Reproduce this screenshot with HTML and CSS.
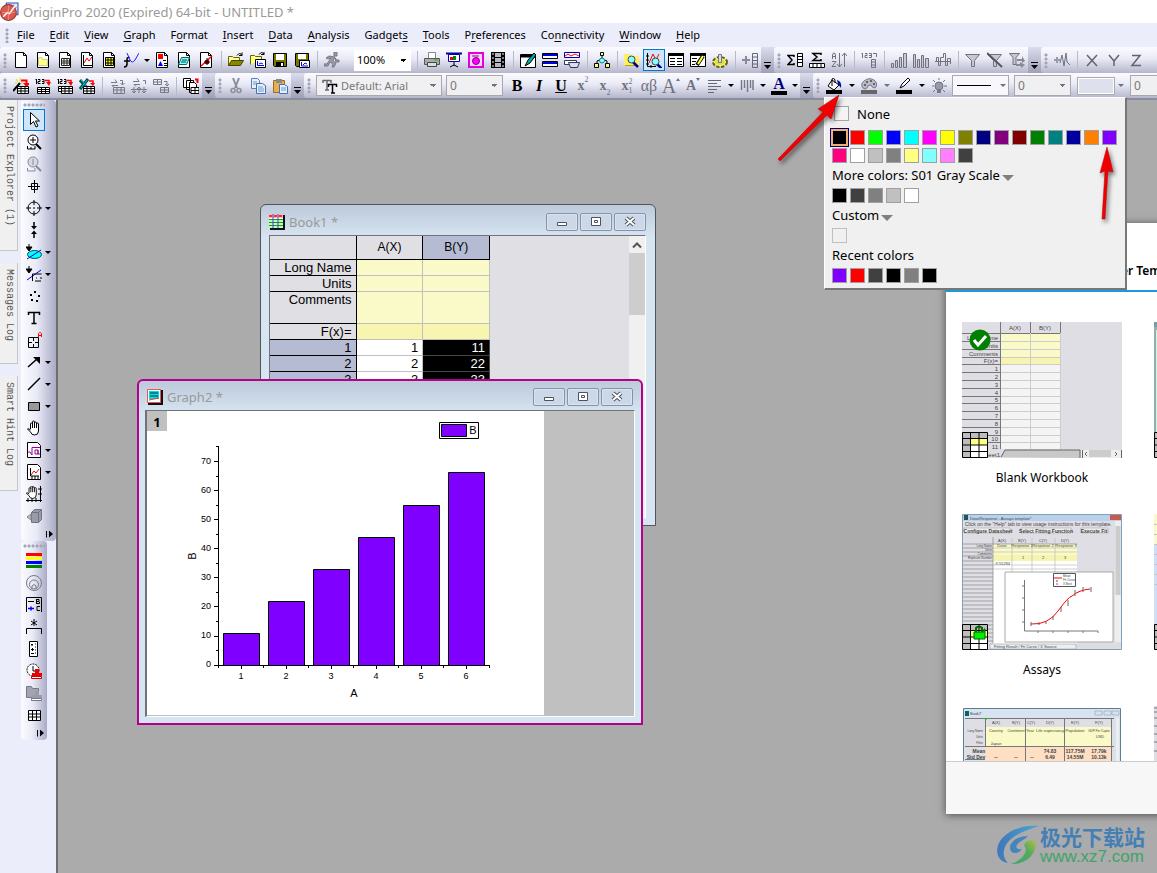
FILE: index.html
```html
<!DOCTYPE html>
<html lang="en">
<head>
<meta charset="utf-8">
<title>OriginPro 2020 (Expired) 64-bit - UNTITLED *</title>
<link rel="stylesheet" href="styles.css">
</head>
<body>
<svg class="defs" aria-hidden="true">
<defs>
<linearGradient id="swoosh" x1="0" y1="0" x2="1" y2="0"><stop offset="0" stop-color="#4176ba"/><stop offset="1" stop-color="#48a9cf"/></linearGradient>
<linearGradient id="leaf" x1="0" y1="1" x2="1" y2="0"><stop offset="0" stop-color="#3da66b"/><stop offset=".6" stop-color="#55aa5b"/><stop offset="1" stop-color="#b5bd4c"/></linearGradient>
<g id="page"><path d="M2.500.5h8l3 3v12h-11z" fill="#fff" stroke="#000"/><path d="M10.500.5v3h3" fill="none" stroke="#000"/></g>
<g id="redarrow"><path d="M8 2.500h5.500V6" fill="none" stroke="#f00" stroke-width="2"/><path d="M10 5h7l-3.500 4z" fill="#f00"/></g>
<g id="minigrid"><path d="M4.500 8.500h11v7h-11zM4.500 10.500h11M4.500 13h11M8 8.500v7M12 8.500v7" fill="#fff" stroke="#000"/></g>
<g id="mag"><path d="M9 10l5 5" stroke="#00008b" stroke-width="2.500"/><circle cx="7.500" cy="7.500" r="3.500" fill="#8ff" stroke="#444"/></g>
<g id="stamp"><path d="M9 6h4v4h3v3H6v-3h3z" /><path d="M5.500 13.500h10v2h-10z" fill="#fff" stroke="currentColor"/></g>
</defs>
<symbol id="i-new" viewBox="0 0 16 16"><use href="#page"/></symbol>
<symbol id="i-folder" viewBox="0 0 16 16"><use href="#page"/><path d="M3.500 5.500h3l1 2h5v6h-9z" fill="#ffff80" stroke="#cc9"/></symbol>
<symbol id="i-book" viewBox="0 0 16 16"><use href="#page"/><path d="M4.500 6.500h8v7h-8zM4.500 9h8M4.500 11h8M7 6.500v7M10 6.500v7" fill="none" stroke="#222"/></symbol>
<symbol id="i-graph" viewBox="0 0 16 16"><use href="#page"/><path d="M4.500 3v10.500H13" fill="none" stroke="#000"/><path d="M5 11l3-5 2 3 3-4" fill="none" stroke="#f00"/></symbol>
<symbol id="i-matrix" viewBox="0 0 16 16"><use href="#page"/><path d="M4.500 5.500h8v8h-8zM4.500 8h8M4.500 11h8M7 5.500v8M10 5.500v8" fill="#ff0" stroke="#000"/></symbol>
<symbol id="i-func" viewBox="0 0 16 16"><path d="M6.500 5.500h-1Q4 5.500 4 7v5q0 3-3 3M1 9h6" fill="none" stroke="#000" stroke-width="1.500"/><path d="M4 1l3 7q2 4 5 0l4-7" fill="none" stroke="#22f"/></symbol>
<symbol id="i-layout" viewBox="0 0 16 16"><use href="#page"/><path d="M4 2h5v5H4z" fill="#f00"/><path d="M4 14l2.500-5L9 14z" fill="#00f"/><path d="M9 8.500h3M10 11.500h3M10 13.500h3" stroke="#000"/></symbol>
<symbol id="i-notes" viewBox="0 0 16 16"><use href="#page"/><path d="M5.500 5.500h8l-3 7h-8z" fill="#8ff" stroke="#066"/><path d="M6 8h5M5 10h5" stroke="#044"/></symbol>
<symbol id="i-digit" viewBox="0 0 16 16"><use href="#page"/><path d="M3 14L14 4" stroke="#f00" stroke-width="1.500"/><path d="M7 8h4v4H7z" fill="#a00"/><path d="M9 6v7M6 10h6" stroke="#000"/></symbol>
<symbol id="i-open" viewBox="0 0 16 16"><path d="M.5 13.500v-9h4l1 1h6v3" fill="#ff9" stroke="#660"/><path d="M.5 13.500l3-5h12l-3 5z" fill="#880" stroke="#440"/><path d="M9 3.500q3-4 5 0m0-3v3h-3" fill="none" stroke="#000"/></symbol>
<symbol id="i-opent" viewBox="0 0 16 16"><path d="M.5 12.500v-9h4l1 1h6v3" fill="#ff8" stroke="#660"/><path d="M9 2.500q3-4 5 0m0-3v3h-3" fill="none" stroke="#000"/><path d="M5.500 7.500h10v8h-10z" fill="#fff" stroke="#000"/><path d="M7.500 9v4.500H14M9 12l2-1 2 1" stroke="#00f" fill="none"/></symbol>
<symbol id="i-save" viewBox="0 0 16 16"><path d="M1.500 1.500h13v13h-12l-1-1z" fill="#770" stroke="#000"/><path d="M4 2h8v6H4z" fill="#fff"/><path d="M4 10h8v5H4z" fill="#000"/><path d="M9 11h2v3H9z" fill="#fff"/></symbol>
<symbol id="i-savet" viewBox="0 0 16 16"><path d="M1.500 1.500h13v13h-12l-1-1z" fill="#770" stroke="#000"/><path d="M4 2h8v5H4z" fill="#fff"/><path d="M5.500 8.500h10v7h-10z" fill="#fff" stroke="#000"/><path d="M7.500 10v4H14M9 13l2-2 2 1" stroke="#00f" fill="none"/></symbol>
<symbol id="i-run" viewBox="0 0 16 16"><path d="M10 0h3v4h-3zM5 4l6 1-2 4 3 2-2 4H8l1-3-3-2-2 4H0v-2h3l4-6-3 1-2-1zM11 6l2 2h2v2h-3z" fill="#999ba9" stroke="#777986"/></symbol>
<symbol id="i-print" viewBox="0 0 16 16"><path d="M4.500 6V.5h7V6" fill="#fff" stroke="#888"/><path d="M.5 6.500h15v6H.5z" fill="#aaa" stroke="#555"/><path d="M3.500 10.500h9v4h-9z" fill="#ddd" stroke="#444"/><path d="M10 8h4" stroke="#0c0" /></symbol>
<symbol id="i-slide" viewBox="0 0 16 16"><path d="M0 1.500h16" stroke="#00a" stroke-width="2"/><path d="M2.500 2.500h11v7h-11z" fill="#fff" stroke="#00a"/><path d="M4 5h4v3H4z" fill="#f00"/><path d="M7 4h3v4H7z" fill="#080"/><path d="M8 10v4M4 15l4-2 4 2" fill="none" stroke="#000"/></symbol>
<symbol id="i-camera" viewBox="0 0 16 16"><path d="M1 1h14v14H1z" fill="#ffd8ff" stroke="#e000e0" stroke-width="2"/><circle cx="8" cy="9" r="3.500" fill="#f0f" stroke="#808"/><path d="M4 4h7" stroke="#808"/></symbol>
<symbol id="i-film" viewBox="0 0 16 16"><path d="M1 0h14v16H1z"/><path d="M5 1h6v4H5zM5 6h6v4H5zM5 11h6v4H5z" fill="#b8b8c4"/><path d="M3 1v15M13 1v15" stroke="#fff" stroke-dasharray="2 2" stroke-width="1"/></symbol>
<symbol id="i-pen" viewBox="0 0 16 16"><path d="M.5 2.500h15v13H.5z" fill="#fff" stroke="#000"/><path d="M1 4h15" stroke="#000" stroke-width="3"/><path d="M14 1L8 8l-3 6 5-3 6-8z" fill="#0aa" stroke="#000"/></symbol>
<symbol id="i-bands" viewBox="0 0 16 16"><path d="M.5 1.500h15v5H.5zM.5 9.500h15v5H.5z" fill="#fff" stroke="#000"/><path d="M1 2h14v2H1zM1 10h14v2H1z" fill="#00d"/></symbol>
<symbol id="i-stackw" viewBox="0 0 16 16"><path d="M.5.5h15v5H.5z" fill="#fff" stroke="#00a"/><path d="M1 4l3-2 3 2 4-2 4 2" fill="none" stroke="#f00"/><path d="M.5 8.500h12v4H.5z" fill="#fff" stroke="#336"/><path d="M4.500 10.500h11l-2 5h-7z" fill="#dde" stroke="#336"/></symbol>
<symbol id="i-tree" viewBox="0 0 16 16"><path d="M8 4v4M3 12V9l5-2 5 2v3" fill="none" stroke="#000"/><path d="M6.500.5h3v3h-3zM.5 11.500h4v4h-4zM11.500 11.500h4v4h-4z" fill="#ff8" stroke="#000"/><circle cx="8" cy="8.500" r="2.500" fill="#8ff" stroke="#088"/></symbol>
<symbol id="i-find" viewBox="0 0 16 16"><path d="M0 2h6l2 2h7v9H0z" fill="#fe6"/><path d="M1 13.500h12" stroke="#aa0"/><use href="#mag"/></symbol>
<symbol id="i-zoomg" viewBox="0 0 16 16"><path d="M1.500 1v13.500H10M0 4h3M0 8h3M0 12h3M5 13v3" fill="none" stroke="#000"/><path d="M3 11l4-9 3 6 3-6" fill="none" stroke="#f00"/><g transform="translate(2 2)"><use href="#mag"/></g></symbol>
<symbol id="i-table" viewBox="0 0 16 16"><path d="M.5 1.500h15v13H.5z" fill="#fff" stroke="#000"/><path d="M0 2.500h16" stroke="#000" stroke-width="3"/><path d="M2 6.500h5M9 6.500h5M2 9.500h5M9 9.500h5M2 12.500h5M9 12.500h5" stroke="#000"/></symbol>
<symbol id="i-edit" viewBox="0 0 16 16"><path d="M.5 1.500h15v13H.5z" fill="#fff" stroke="#000"/><path d="M0 2.500h16" stroke="#000" stroke-width="3"/><path d="M2 6.500h5M2 9.500h4M2 12.500h3" stroke="#000"/><path d="M13 4l-6 9" stroke="#000" stroke-width="4"/><path d="M13 4l-5 8" stroke="#ff4" stroke-width="2"/></symbol>
<symbol id="i-gear" viewBox="0 0 16 16"><ellipse cx="8" cy="10" rx="6.500" ry="4.500" fill="#dd4" stroke="#660" stroke-width="3" stroke-dasharray="3 1.500"/><ellipse cx="8" cy="10" rx="5.500" ry="3.500" fill="#dd4" stroke="#ff9"/><path d="M6.500 2.500h3v8h-3z" fill="#ddd" stroke="#777"/></symbol>
<symbol id="i-addcol" viewBox="0 0 16 16"><path d="M0 8h8M4 4v8" stroke="#888a98" stroke-width="2"/><path d="M10.500 1.500h5v14h-5zM10 5h6M10 8.500h6M10 12h6" fill="none" stroke="#666876"/></symbol>
<symbol id="i-sumcol" viewBox="0 0 16 16"><path d="M7 5V3.500H1L5 8l-4 4.500h6V11" fill="none" stroke="#000" stroke-width="1.500"/><path d="M10.500 1.500h5v13h-5zM10 4.500h6M10 7.500h6M10 10.500h6" fill="#fff" stroke="#000"/></symbol>
<symbol id="i-sumrow" viewBox="0 0 16 16"><path d="M12 3V1.500H4L8 5 4 8.500h8V7" fill="none" stroke="#000" stroke-width="1.500"/><path d="M.5 11.500h15v4H.5zM4 12v4M8 12v4M12 12v4" fill="#fff" stroke="#000"/></symbol>
<symbol id="i-sort" viewBox="0 0 16 16"><g fill="none" stroke="#70727f"><path d="M1.500 7V3l1-2h1l1 2v4M1 4.500h4M1 9.500h4l-4 5h4M8.500 1v14M6 12l2.500 3 2.500-3M13.500 15V1M11 4l2.500-3L16 4"/></g></symbol>
<symbol id="i-123" viewBox="0 0 16 16"><g fill="none" stroke="#70727f"><path d="M.5 2l1-1v5M4 1.500h2v2H4v2h2.500M8 1.500h2.500v4H8M8 3.500h2M12 1.500h3.500V5M10.500 7.500h4v8h-4zM10 10h5M10 13h5"/></g></symbol>
<symbol id="i-bars1" viewBox="0 0 16 16"><path d="M.5 15.500v-4h2v4zM4.500 15.500v-7h2v7zM8.500 15.500v-10h2v10zM12.500 15.500V1.500h3v14z" fill="#c7c9d6" stroke="#70727f"/></symbol>
<symbol id="i-bars2" viewBox="0 0 16 16"><path d="M.5 15.500V2.500h2v13zM4.500 15.500v-8h2v8zM8.500 15.500v-12h2v12zM12.500 15.500v-9h3v9z" fill="#c7c9d6" stroke="#70727f"/></symbol>
<symbol id="i-bars3" viewBox="0 0 16 16"><path d="M0 9.500h16M1.500 9V5.500h2v8h2v-8h3V1.500h2v12h2v-7h3V12" fill="none" stroke="#70727f" stroke-width="1"/></symbol>
<symbol id="i-funnel" viewBox="0 0 16 16"><path d="M.5 2.500h14l-5 6v6h-3v-6z" fill="#c5c7d5" stroke="#70727f"/></symbol>
<symbol id="i-funnelx" viewBox="0 0 16 16"><path d="M.5 2.500h14l-5 6v6h-3v-6z" fill="#c5c7d5" stroke="#70727f"/><path d="M0 1l15 14" stroke="#555765" stroke-width="2"/></symbol>
<symbol id="i-funnelr" viewBox="0 0 16 16"><path d="M.5 1.500h10l-3.500 4v7H4v-7z" fill="#c5c7d5" stroke="#70727f"/><path d="M8 7h5V4l3 5-3 2v-2H8zM7 12h4v-2l5 3-4 3v-2H7z" fill="#888a98"/></symbol>
<symbol id="i-wave" viewBox="0 0 16 16"><path d="M0 8h6M3 5v6" stroke="#999ba9" stroke-width="2"/><path d="M6 11l2-8 2 11 2-13 1 9 3 3" fill="none" stroke="#70727f"/></symbol>
<symbol id="i-x" viewBox="0 0 16 16"><path d="M3 3l10 11M13 3L3 14" stroke="#62646f" stroke-width="1.500"/></symbol>
<symbol id="i-y" viewBox="0 0 16 16"><path d="M3 3l5 6 5-6M8 9v5" fill="none" stroke="#62646f" stroke-width="1.500"/></symbol>
<symbol id="i-z" viewBox="0 0 16 16"><path d="M4 3.500h8L4 13.500h9" fill="none" stroke="#62646f" stroke-width="1.500"/></symbol>
<symbol id="i-wand" viewBox="0 0 16 16"><path d="M0 13l7-8" stroke="#000" stroke-width="2"/><path d="M3 1l2 3M7 0v3M10 5H8M2 5h2" stroke="#dd0"/><use href="#redarrow"/><use href="#minigrid"/></symbol>
<symbol id="i-imp" viewBox="0 0 16 16"><path d="M.5 2l1-1v5M3 1.500h2v2H3v2h2.500M7 1.500h2v4H7M7 3.500h2" fill="none" stroke="#000"/><path d="M10 2.500h4V6" fill="none" stroke="#f00" stroke-width="1.500"/><path d="M11 4h5l-2 4z" fill="#f00"/><path d="M2.500 9.500h12v6h-12zM3 11.500h12M3 13.500h12M6.500 9v6M10.500 9v6" fill="#fff" stroke="#000"/></symbol>
<symbol id="i-imp2" viewBox="0 0 16 16"><path d="M.5 2l1-1v5M3 1.500h2v2H3v2h2.500M7 1.500h2v4H7M7 3.500h2" fill="none" stroke="#000"/><path d="M10 2.500h4V6" fill="none" stroke="#f00" stroke-width="1.500"/><path d="M11 4h5l-2 4z" fill="#f00"/><path d="M1.500 8.500h9v5h-9zM2 10.500h9" fill="#fff" stroke="#000"/><use href="#minigrid"/></symbol>
<symbol id="i-excel" viewBox="0 0 16 16"><path d="M1 2l8 9M9 1L1 11" stroke="#004b4b" stroke-width="3"/><path d="M2 2l7 8M8 2l-6 8" stroke="#0cc"/><path d="M10 3l4 0v3" fill="none" stroke="#f00" stroke-width="1.500"/><path d="M11 5h5l-2 3z" fill="#f00"/><use href="#minigrid"/></symbol>
<symbol id="i-re1" viewBox="0 0 16 16"><g fill="none" stroke="#777986"><path d="M2 4.500h6l-2-3M9 7.500H3l2 2M11 2.500h2.500V7m-2-2l2 2 2-2M4.500 9.500h11v6h-11zM4.500 12h11M8 9v6M12 9v6"/></g></symbol>
<symbol id="i-re2" viewBox="0 0 16 16"><g fill="none" stroke="#777986"><path d="M2 3.500h6l-2-3M9 6.500H3l2 2M12 2.500h2.500V6M3 9v6m-2-2l2 2 2-2M8 15V9m-2 2l2-2 2 2M13 9v6m-2-2l2 2 2-2M0 11.500h16"/></g></symbol>
<symbol id="i-re3" viewBox="0 0 16 16"><g fill="none" stroke="#777986"><path d="M.5 1.500h8v5h-8zM0 4h9M4.500 1v6M7.500 9.500h8v5h-8zM7 12h9M11.500 9v6M11 3.500h3V8m-2-2l2 2 2-2"/></g></symbol>
<symbol id="i-pages" viewBox="0 0 16 16"><path d="M.5.5h7v9h-7zM3.500 2.500h7v9h-7z" fill="#fff" stroke="#000"/><path d="M6.500 4.500h5l2 2v8h-7z" fill="#fff" stroke="#000"/><path d="M12 1.500h2.500V5" fill="none" stroke="#f00" stroke-width="2"/><path d="M8 9.500h8v6H8zM8 12.500h8M12 9v7" fill="#fff" stroke="#000"/></symbol>
<symbol id="i-cut" viewBox="0 0 16 16"><path d="M5 0l4 10M11 0L7 10" stroke="#8c8e9c" stroke-width="2"/><circle cx="5" cy="12.500" r="2" fill="none" stroke="#8c8e9c" stroke-width="1.500"/><circle cx="11" cy="12.500" r="2" fill="none" stroke="#8c8e9c" stroke-width="1.500"/></symbol>
<symbol id="i-copy" viewBox="0 0 16 16"><path d="M1.500.5h6l2 2v8h-8z" fill="#e5f0fc" stroke="#5580b8"/><path d="M6.500 5.500h6l3 2v8h-9z" fill="#e5f0fc" stroke="#4470b0"/><path d="M3 4h4M3 6h3M8 9h5M8 11h6M8 13h6" stroke="#6c98d0"/></symbol>
<symbol id="i-paste" viewBox="0 0 16 16"><path d="M1.500 2.500h11v12h-11z" fill="#e8b04c" stroke="#9b6b20"/><path d="M4 1h6v4H4z" fill="#888"/><path d="M7.500 6.500h5l3 2v7h-8z" fill="#e5f0fc" stroke="#4470b0"/><path d="M9 10h5M9 12h5" stroke="#6c98d0"/></symbol>
<symbol id="i-tt" viewBox="0 0 16 16"><path d="M1 2.500h8M5 2v10M1 2v3M9 2v3M3 12h4" stroke="#666876" stroke-width="1.500"/><path d="M6 6.500h9M10.500 6v9M6.500 6v3M14.500 6v3M9 15h4" stroke="#000" stroke-width="1.500"/></symbol>
<symbol id="i-align" viewBox="0 0 16 16"><path d="M1 2.500h13M1 5.500h9M1 8.500h13M1 11.500h9M1 14.500h6" stroke="#666876"/></symbol>
<symbol id="i-vert" viewBox="0 0 16 16"><path d="M2.500 2v10M5.500 2v8M8.500 2v12M11.500 2v8M14 2v10" stroke="#777986" stroke-width="1.500"/></symbol>
<symbol id="i-fill" viewBox="0 0 16 16"><path d="M6 2l7 5-5 5-6-4z" fill="#fff" stroke="#000"/><path d="M6 8V1q2-2 3 1v3" fill="none" stroke="#000"/><path d="M11 2q5 1 4 8l-3-4z" fill="#00109a"/><path d="M0 12h16v4H0z"/></symbol>
<symbol id="i-palette" viewBox="0 0 16 16"><path d="M2 10Q-1 6 3 3q5-4 10-1 5 4 1 8-3 0-4-3-4 0-4 3-2 2-4 0z" fill="#b8bac8" stroke="#777986"/><path d="M5 4h2M9 3h2M12 6h2M3 7h2" stroke="#666" stroke-width="2"/><path d="M0 12h16v4H0z" fill="#666"/></symbol>
<symbol id="i-line" viewBox="0 0 16 16"><path d="M4 10l2-4 6-6 2 2-6 6z" fill="#fff" stroke="#000"/><path d="M0 12h16v4H0z"/></symbol>
<symbol id="i-bulb" viewBox="0 0 16 16"><circle cx="8" cy="8" r="4" fill="#999bab" stroke="#70727f"/><path d="M6 11h4v4H6z" fill="#777986"/><path d="M8 0v2M1 8h2M13 8h3M2 2l2 2M14 2l-2 2M2 14l2-2M14 14l-2-2" stroke="#70727f"/></symbol>
<symbol id="i-arrow" viewBox="0 0 16 16"><path d="M4.500.5v12l3-3 2.500 5.500 2-1-2.500-5h4z" fill="#fff" stroke="#000"/></symbol>
<symbol id="i-zin" viewBox="0 0 16 16"><path d="M10 10l5 5" stroke="#000" stroke-width="2"/><circle cx="7" cy="6" r="5" fill="#fff" stroke="#000"/><path d="M4 6h6M7 3v6M1.500 12v3H9v-3M5 13v2" fill="none" stroke="#000"/></symbol>
<symbol id="i-zout" viewBox="0 0 16 16"><path d="M10 10l5 5" stroke="#888a98" stroke-width="2"/><circle cx="7" cy="6" r="5" fill="#d7d9e4" stroke="#888a98"/><path d="M7 3v6M1.500 12v3H9v-3" fill="none" stroke="#888a98"/></symbol>
<symbol id="i-cross" viewBox="0 0 16 16"><path d="M2 8.500h12M8.500 2v13M5.500 5.500h6v6h-6z" fill="none" stroke="#000"/></symbol>
<symbol id="i-target" viewBox="0 0 16 16"><circle cx="8" cy="8" r="6" fill="none" stroke="#000"/><path d="M8 0v5M8 11v5M0 8h5M11 8h5M7 8h2" stroke="#000"/></symbol>
<symbol id="i-arrows" viewBox="0 0 16 16"><path d="M8 0v5M8 11v5" stroke="#000" stroke-width="1.500"/><path d="M5 4h6L8 7.500zM5 12h6L8 8.500z"/></symbol>
<symbol id="i-ellipse" viewBox="0 0 16 16"><ellipse cx="8.500" cy="10.500" rx="7" ry="4" fill="#0ff" stroke="#055"/><path d="M1 15L15 6" stroke="#00d"/><path d="M3 0v4M0 3h6L3 7z" stroke="#000"/></symbol>
<symbol id="i-curve" viewBox="0 0 16 16"><path d="M1 14L15 4" stroke="#00d"/><path d="M3 0v4M0 3h6L3 7z" stroke="#000"/><path d="M6.500 15V8h9M10 12h1M14 12h2M9 15h6" fill="none" stroke="#000"/></symbol>
<symbol id="i-dots" viewBox="0 0 16 16"><path d="M8 3h2v2H8zM4 6h2v2H4zM12 7h2v2h-2zM5 11h2v2H5zM10 12h2v2h-2z"/></symbol>
<symbol id="i-text" viewBox="0 0 16 16"><path d="M2.500 5V2.500h11V5M8 2.500v11M5.500 13.500h5" fill="none" stroke="#000" stroke-width="1.500"/></symbol>
<symbol id="i-boxa" viewBox="0 0 16 16"><path d="M2.500 5.500h10v10h-10zM7.500 5v4M7.500 12v4M2 10.500h4M9 10.500h4" fill="none" stroke="#000"/><path d="M12.500 5V1.500l1-1h1l1 1V5M12.500 3.500h3" fill="none" stroke="#f00"/></symbol>
<symbol id="i-arr" viewBox="0 0 16 16"><path d="M2 13L11 5" stroke="#000" stroke-width="1.500"/><path d="M7 3h7v7z"/></symbol>
<symbol id="i-ln" viewBox="0 0 16 16"><path d="M2 14L14 2" stroke="#000" stroke-width="1.500"/></symbol>
<symbol id="i-rect" viewBox="0 0 16 16"><path d="M2.500 4.500h11v8h-11z" fill="#999" stroke="#000"/></symbol>
<symbol id="i-hand" viewBox="0 0 16 16"><path d="M4.500 9V4q0-1 1-1t1 1V2q0-1 1-1t1 1v1q0-1 1-1t1 1v1q0-1 1-1t1 1v7q0 4-4 4-3 0-4-3L1.500 9q1-1 3 1M6.500 4v4M8.500 3v5M10.500 4v4" fill="#fff" stroke="#000"/></symbol>
<symbol id="i-sqrt" viewBox="0 0 16 16"><path d="M1.500.5h10l3 3v12h-13z" fill="#fff" stroke="#000"/><path d="M2 10h2l2 3V5.500h8M12 8H9v4h3V8v4h2" fill="none" stroke="#909"/></symbol>
<symbol id="i-sgraph" viewBox="0 0 16 16"><path d="M1.500.5h10l3 3v12h-13z" fill="#fff" stroke="#000"/><path d="M4.500 4v8H13M6 12v3M9 12v3M12 12v3" fill="none" stroke="#000"/><path d="M5 11l3-4 2 2 3-4" fill="none" stroke="#f00"/></symbol>
<symbol id="i-pan" viewBox="0 0 16 16"><g transform="translate(-1 -1) scale(.9)"><use href="#i-hand" width="16" height="16"/></g><path d="M0 14.500h16M14.500 0v16M2 12v4M6 12v4M10 12v4M12 3h4M12 8h4" stroke="#000"/></symbol>
<symbol id="i-cube" viewBox="0 0 16 16"><path d="M5.500 4.500l3-3h7v10l-3 3h-7z" fill="#999bab" stroke="#70727f"/><path d="M5.500 4.500h7v10M12.500 4.500l3-3" fill="none" stroke="#70727f"/><path d="M5 6v6L1 9z" fill="#bbbdcb" stroke="#888"/></symbol>
<symbol id="i-colors" viewBox="0 0 16 16"><path d="M0 0h16v3H0z" fill="#f00"/><path d="M0 4h16v3H0z" fill="#ff0"/><path d="M0 8h16v3H0z" fill="#00f"/><path d="M0 12h16v3H0z" fill="#008000"/></symbol>
<symbol id="i-rings" viewBox="0 0 16 16"><g fill="none" stroke="#777986"><circle cx="8" cy="8" r="7.500"/><circle cx="8" cy="9.500" r="4.500"/><path d="M6 14v-3q2-3 4 0v3"/></g></symbol>
<symbol id="i-bc" viewBox="0 0 16 16"><path d="M.5 15V.5h15V15M2 4.500h6M10.500 2v5M10 2.500h3v2h-3M13.500 5v1.500H10M14 9.500h-3v4h3" fill="none" stroke="#000"/><path d="M2 11.500h6M5 9.500v4" stroke="#00f" stroke-width="1.500"/></symbol>
<symbol id="i-star" viewBox="0 0 16 16"><path d="M8 0v7M5 2l6 4M11 2L5 6M.5 15V9.500h15V15" fill="none" stroke="#000"/></symbol>
<symbol id="i-ruler" viewBox="0 0 16 16"><path d="M3.500.5h8v15h-8z" fill="#fff" stroke="#000"/><path d="M5 3.500h2M6 3v2M5 8.500h3M6.500 7v3M5 12.500h3M9 3h1M9 6h1M9 9h1M9 12h1" stroke="#000"/></symbol>
<symbol id="i-clock" viewBox="0 0 16 16"><circle cx="7" cy="7" r="6" fill="#fff" stroke="#000" stroke-dasharray="2 1"/><path d="M7 3v5h3" fill="none" stroke="#000"/><g color="#c00" fill="#e00"><use href="#stamp"/></g></symbol>
<symbol id="i-fstamp" viewBox="0 0 16 16"><path d="M.5 1.500h5l1 2h6v9H.5z" fill="#a2a4b4" stroke="#777986"/><g color="#777986" fill="#999bab"><use href="#stamp"/></g></symbol>
<symbol id="i-grid" viewBox="0 0 16 16"><path d="M2.500 3.500h12v10h-12zM2.500 7h12M2.500 10h12M6.500 3.500v10M10.500 3.500v10" fill="#fff" stroke="#000"/></symbol>
<symbol id="w-min" viewBox="0 0 16 16"><path d="M3.500 8.500h9v3h-9z" fill="#fff" stroke="#4c5260"/></symbol>
<symbol id="w-max" viewBox="0 0 16 16"><path d="M3.500 3.500h9v8h-9z" fill="#fff" stroke="#4c5260"/><path d="M6.500 6.500h3v2h-3z" fill="#fff" stroke="#4c5260"/></symbol>
<symbol id="w-close" viewBox="0 0 16 16"><path d="M4 4l8 7M12 4l-8 7" stroke="#4c5260" stroke-width="4"/><path d="M4 4l8 7M12 4l-8 7" stroke="#fff" stroke-width="2"/></symbol>
<symbol id="wb" viewBox="0 0 26 26"><path d="M.5.5h25v25H.5z" fill="#fff"/><path d="M0 0h26v7H0zM0 0h8v26H0z" fill="#bdbdbd"/><path d="M8 7h18v6H8z" fill="#ffff80"/><path d="M.5.5h25v25H.5zM0 6.500h26M0 13h26M0 19.500h26M8.500 0v26M17 0v26" fill="none" stroke="#000"/></symbol>
</svg>

<header class="titlebar">
  <svg class="logo" viewBox="0 0 18 18"><path d="M6 1h11v11H6z" fill="#e8eeff" stroke="#2850a8"/><path d="M9 1v11M13 1v11M6 5h11" stroke="#88a4dc"/><circle cx="8" cy="10" r="7.500" fill="#d65c50" stroke="#a83030"/><path d="M3 14l4-4 2 1 5-7" fill="none" stroke="#fff" stroke-width="1.500"/><path d="M2 10h12M8 3v14" stroke="#f4a49a" opacity=".6"/></svg>
  <h1>OriginPro 2020 (Expired) 64-bit - UNTITLED *</h1>
</header>
<nav class="menubar">
  <span class="grip"></span>
  <button><u>F</u>ile</button><button><u>E</u>dit</button><button><u>V</u>iew</button><button><u>G</u>raph</button><button>F<u>o</u>rmat</button><button><u>I</u>nsert</button><button><u>D</u>ata</button><button><u>A</u>nalysis</button><button>Gadget<u>s</u></button><button><u>T</u>ools</button><button>P<u>r</u>eferences</button><button>Co<u>n</u>nectivity</button><button><u>W</u>indow</button><button><u>H</u>elp</button>
</nav>

<div class="toolrow">
  <div class="bar">
    <span class="grip"></span>
    <button class="tool" aria-label="New project"><svg><use href="#i-new"/></svg></button>
    <button class="tool" aria-label="New folder"><svg><use href="#i-folder"/></svg></button>
    <button class="tool" aria-label="New workbook"><svg><use href="#i-book"/></svg></button>
    <button class="tool" aria-label="New graph"><svg><use href="#i-graph"/></svg></button>
    <button class="tool" aria-label="New matrix"><svg><use href="#i-matrix"/></svg></button>
    <button class="tool" aria-label="New function"><svg><use href="#i-func"/></svg></button>
    <button class="drop" aria-label="Function options"></button>
    <button class="tool" aria-label="New layout"><svg><use href="#i-layout"/></svg></button>
    <button class="tool" aria-label="New notes"><svg><use href="#i-notes"/></svg></button>
    <button class="tool" aria-label="Digitizer"><svg><use href="#i-digit"/></svg></button>
    <span class="sep"></span>
    <button class="tool" aria-label="Open"><svg><use href="#i-open"/></svg></button>
    <button class="tool" aria-label="Open template"><svg><use href="#i-opent"/></svg></button>
    <button class="tool" aria-label="Save"><svg><use href="#i-save"/></svg></button>
    <button class="tool" aria-label="Save template"><svg><use href="#i-savet"/></svg></button>
    <span class="sep"></span>
    <button class="tool" aria-label="Run"><svg><use href="#i-run"/></svg></button>
    <select class="combo zoom" aria-label="Zoom"><option>100%</option></select>
    <span class="sep"></span>
    <button class="tool" aria-label="Print"><svg><use href="#i-print"/></svg></button>
    <button class="tool" aria-label="Slide show"><svg><use href="#i-slide"/></svg></button>
    <button class="tool" aria-label="Export image"><svg><use href="#i-camera"/></svg></button>
    <button class="tool" aria-label="Video"><svg><use href="#i-film"/></svg></button>
    <span class="sep"></span>
    <button class="tool" aria-label="Refresh"><svg><use href="#i-pen"/></svg></button>
    <button class="tool" aria-label="Duplicate"><svg><use href="#i-bands"/></svg></button>
    <button class="tool" aria-label="Batch"><svg><use href="#i-stackw"/></svg></button>
    <span class="sep"></span>
    <button class="tool" aria-label="Custom routine"><svg><use href="#i-tree"/></svg></button>
    <span class="sep"></span>
    <button class="tool" aria-label="Project explorer"><svg><use href="#i-find"/></svg></button>
    <button class="tool active" aria-label="Object manager"><svg><use href="#i-zoomg"/></svg></button>
    <button class="tool" aria-label="Results log"><svg><use href="#i-table"/></svg></button>
    <button class="tool" aria-label="Command window"><svg><use href="#i-edit"/></svg></button>
    <button class="tool" aria-label="Code builder"><svg><use href="#i-gear"/></svg></button>
    <span class="sep"></span>
    <button class="tool" aria-label="Add column"><svg><use href="#i-addcol"/></svg></button>
  </div><button class="more" aria-label="More tools"></button>
  <div class="bar">
    <span class="grip"></span>
    <button class="tool" aria-label="Column statistics"><svg><use href="#i-sumcol"/></svg></button>
    <button class="tool" aria-label="Row statistics"><svg><use href="#i-sumrow"/></svg></button>
    <button class="tool" aria-label="Sort"><svg><use href="#i-sort"/></svg></button>
    <span class="sep"></span>
    <button class="tool" aria-label="Set values"><svg><use href="#i-123"/></svg></button>
    <span class="sep"></span>
    <button class="tool" aria-label="Ascending"><svg><use href="#i-bars1"/></svg></button>
    <button class="tool" aria-label="Random"><svg><use href="#i-bars2"/></svg></button>
    <button class="tool" aria-label="Normal"><svg><use href="#i-bars3"/></svg></button>
    <span class="sep"></span>
    <button class="tool" aria-label="Filter"><svg><use href="#i-funnel"/></svg></button>
    <button class="tool" aria-label="Disable filter"><svg><use href="#i-funnelx"/></svg></button>
    <button class="tool" aria-label="Reapply filter"><svg><use href="#i-funnelr"/></svg></button>
  </div><button class="more" aria-label="More tools"></button>
  <div class="bar grow">
    <span class="grip"></span>
    <button class="tool" aria-label="Add plot"><svg><use href="#i-wave"/></svg></button>
    <span class="sep"></span>
    <button class="tool" aria-label="Set as X"><svg><use href="#i-x"/></svg></button>
    <button class="tool" aria-label="Set as Y"><svg><use href="#i-y"/></svg></button>
    <button class="tool" aria-label="Set as Z"><svg><use href="#i-z"/></svg></button>
  </div>
</div>
<div class="toolrow second">
  <div class="bar">
    <span class="grip"></span>
    <button class="tool" aria-label="Import wizard"><svg><use href="#i-wand"/></svg></button>
    <button class="tool" aria-label="Import ASCII"><svg><use href="#i-imp"/></svg></button>
    <button class="tool" aria-label="Import multiple"><svg><use href="#i-imp2"/></svg></button>
    <button class="tool" aria-label="Import Excel"><svg><use href="#i-excel"/></svg></button>
    <span class="sep"></span>
    <button class="tool" aria-label="Reimport"><svg><use href="#i-re1"/></svg></button>
    <button class="tool" aria-label="Recalculate"><svg><use href="#i-re2"/></svg></button>
    <button class="tool" aria-label="Clone import"><svg><use href="#i-re3"/></svg></button>
    <span class="sep"></span>
    <button class="tool" aria-label="Batch processing"><svg><use href="#i-pages"/></svg></button>
  </div><button class="more" aria-label="More tools"></button>
  <div class="bar">
    <span class="grip"></span>
    <button class="tool" aria-label="Cut"><svg><use href="#i-cut"/></svg></button>
    <button class="tool" aria-label="Copy"><svg><use href="#i-copy"/></svg></button>
    <button class="tool" aria-label="Paste"><svg><use href="#i-paste"/></svg></button>
  </div><button class="more" aria-label="More tools"></button>
  <div class="bar">
    <span class="grip"></span>
    <div class="fontbox"><svg><use href="#i-tt"/></svg><select class="combo plain" aria-label="Font" disabled><option>Default: Arial</option></select></div>
    <select class="combo grey" aria-label="Font size" disabled><option>0</option></select>
    <button class="tool glyph">B</button>
    <button class="tool glyph italic">I</button>
    <button class="tool glyph under">U</button>
    <button class="tool glyph dim">x<sup>2</sup></button>
    <button class="tool glyph dim">x<sub>2</sub></button>
    <button class="tool glyph dim">x<span class="both"><sup>2</sup><sub>1</sub></span></button>
    <button class="tool glyph dim greek">αβ</button>
    <button class="tool glyph dim big">A<i class="up"></i></button>
    <button class="tool glyph dim">A<i class="down"></i></button>
    <button class="tool" aria-label="Align"><svg><use href="#i-align"/></svg></button>
    <button class="drop" aria-label="Align options"></button>
    <button class="tool" aria-label="Line spacing"><svg><use href="#i-vert"/></svg></button>
    <button class="drop" aria-label="Spacing options"></button>
    <button class="tool glyph colour">A</button>
    <button class="drop" aria-label="Font colours"></button>
  </div><button class="more" aria-label="More tools"></button>
  <div class="bar grow">
    <span class="grip"></span>
    <button class="tool" aria-label="Fill colour"><svg><use href="#i-fill"/></svg></button>
    <button class="drop wide" aria-label="Fill colours"></button>
    <button class="tool" aria-label="Palette"><svg><use href="#i-palette"/></svg></button>
    <button class="drop wide off" aria-label="Palettes"></button>
    <button class="tool" aria-label="Line colour"><svg><use href="#i-line"/></svg></button>
    <button class="drop wide" aria-label="Line colours"></button>
    <button class="tool" aria-label="Lighting"><svg><use href="#i-bulb"/></svg></button>
    <button class="linebox" aria-label="Line style"><i></i></button>
    <select class="combo grey" aria-label="Line width" disabled><option>0</option></select>
    <button class="pattern" aria-label="Pattern"></button><button class="drop wide off" aria-label="Patterns"></button>
    <select class="combo grey" aria-label="Pattern width" disabled><option>0</option></select>
  </div>
</div>

<div class="main">
  <aside class="dock">
    <button class="one">Project Explorer (1)</button>
    <button class="two">Messages Log</button>
    <button class="three">Smart Hint Log</button>
  </aside>
  <div class="rails">
    <div class="rail">
      <span class="hgrip"></span>
      <div><button class="tool active" aria-label="Pointer"><svg><use href="#i-arrow"/></svg></button></div>
      <div><button class="tool" aria-label="Zoom in"><svg><use href="#i-zin"/></svg></button></div>
      <div><button class="tool" aria-label="Zoom out"><svg><use href="#i-zout"/></svg></button></div>
      <div><button class="tool" aria-label="Screen reader"><svg><use href="#i-cross"/></svg></button></div>
      <div><button class="tool" aria-label="Data reader"><svg><use href="#i-target"/></svg></button><button class="drop" aria-label="Readers"></button></div>
      <div><button class="tool" aria-label="Data selector"><svg><use href="#i-arrows"/></svg></button></div>
      <div><button class="tool" aria-label="Region selection"><svg><use href="#i-ellipse"/></svg></button><button class="drop" aria-label="Regions"></button></div>
      <div><button class="tool" aria-label="Mask points"><svg><use href="#i-curve"/></svg></button><button class="drop" aria-label="Masks"></button></div>
      <div><button class="tool" aria-label="Draw data"><svg><use href="#i-dots"/></svg></button></div>
      <div><button class="tool" aria-label="Text"><svg><use href="#i-text"/></svg></button></div>
      <div><button class="tool" aria-label="Annotation"><svg><use href="#i-boxa"/></svg></button></div>
      <div><button class="tool" aria-label="Arrow"><svg><use href="#i-arr"/></svg></button><button class="drop" aria-label="Arrows"></button></div>
      <div><button class="tool" aria-label="Line"><svg><use href="#i-ln"/></svg></button><button class="drop" aria-label="Lines"></button></div>
      <div><button class="tool" aria-label="Rectangle"><svg><use href="#i-rect"/></svg></button><button class="drop" aria-label="Shapes"></button></div>
      <div><button class="tool" aria-label="Pan"><svg><use href="#i-hand"/></svg></button></div>
      <div><button class="tool" aria-label="Equation"><svg><use href="#i-sqrt"/></svg></button><button class="drop" aria-label="Equations"></button></div>
      <div><button class="tool" aria-label="Insert graph"><svg><use href="#i-sgraph"/></svg></button><button class="drop" aria-label="Graphs"></button></div>
      <div><button class="tool" aria-label="Rescale"><svg><use href="#i-pan"/></svg></button></div>
      <div><button class="tool" aria-label="Rotate"><svg><use href="#i-cube"/></svg></button></div>
      <button class="railmore" aria-label="More tools"></button>
    </div>
    <div class="rail narrow">
      <span class="hgrip"></span>
      <button class="tool" aria-label="Colour scale"><svg><use href="#i-colors"/></svg></button>
      <button class="tool" aria-label="Bubble scale"><svg><use href="#i-rings"/></svg></button>
      <button class="tool" aria-label="Legend"><svg><use href="#i-bc"/></svg></button>
      <button class="tool" aria-label="Asterisk bracket"><svg><use href="#i-star"/></svg></button>
      <button class="tool" aria-label="XY scale"><svg><use href="#i-ruler"/></svg></button>
      <button class="tool" aria-label="Time stamp"><svg><use href="#i-clock"/></svg></button>
      <button class="tool" aria-label="Project stamp"><svg><use href="#i-fstamp"/></svg></button>
      <button class="tool" aria-label="Add table"><svg><use href="#i-grid"/></svg></button>
      <button class="railmore" aria-label="More tools"></button>
    </div>
  </div>

  <main class="workspace">
    <section class="window book">
      <header><svg class="wicon" viewBox="0 0 16 16"><path d="M1 1h15v15H1z" fill="#111"/><path d="M0 0h14v14H0z" fill="#fff"/><path d="M0 0h14v4H0z" fill="#fbb"/><path d="M0 2h14" stroke="#e33" stroke-width="2" stroke-dasharray="3 2"/><path d="M0 6h14v8H0z" fill="#bfb"/><path d="M0 5.500h14M0 8.500h14M0 11.500h14" stroke="#292"/><path d="M4 0v14M9 0v14" stroke="#44c"/></svg><h2>Book1 *</h2>
        <button aria-label="Minimize"><svg><use href="#w-min"/></svg></button><button aria-label="Maximize"><svg><use href="#w-max"/></svg></button><button aria-label="Close"><svg><use href="#w-close"/></svg></button></header>
      <div class="client sheet">
        <table>
          <thead><tr><th></th><th>A(X)</th><th class="sel">B(Y)</th></tr></thead>
          <tbody>
            <tr class="meta"><th>Long Name</th><td></td><td></td></tr>
            <tr class="meta"><th>Units</th><td></td><td></td></tr>
            <tr class="meta tall"><th>Comments</th><td></td><td></td></tr>
            <tr class="meta fx"><th>F(x)=</th><td></td><td></td></tr>
            <tr><th>1</th><td>1</td><td>11</td></tr>
            <tr><th>2</th><td>2</td><td>22</td></tr>
            <tr><th>3</th><td>3</td><td>33</td></tr>
          </tbody>
        </table>
        <div class="scroll"><svg viewBox="0 0 16 16"><path d="M4 11l4-4 4 4" fill="none" stroke="#555" stroke-width="2"/></svg><i></i></div>
      </div>
    </section>

    <section class="window plot">
      <header><svg class="wicon" viewBox="0 0 16 16"><path d="M1 1h15v15H1z" fill="#111"/><path d="M.5.5h13v13H.5z" fill="#fff" stroke="#e55"/><path d="M2 2h10v8H2z" fill="#0dd"/><path d="M3 4h8M3 7h8" stroke="#035"/><path d="M2 11l10-2" stroke="#e33"/></svg><h2>Graph2 *</h2>
        <button aria-label="Minimize"><svg><use href="#w-min"/></svg></button><button aria-label="Maximize"><svg><use href="#w-max"/></svg></button><button aria-label="Close"><svg><use href="#w-close"/></svg></button></header>
      <div class="client canvas">
        <svg class="chart" viewBox="0 0 397 304" role="img" aria-label="Column chart of B against A">
          <path d="M0 0h20v20H0z" fill="#c0c0c0"/><text x="10" y="16" class="layer">1</text>
          <g class="column"><path d="M76.500 222.500h36v32h-36z"/><path d="M121.500 190.500h36v64h-36z"/><path d="M166.500 158.500h36v96h-36z"/><path d="M211.500 126.500h36v128h-36z"/><path d="M256.500 94.500h36v160h-36z"/><path d="M301.500 61.500h36v193h-36z"/></g>
          <path class="axis" d="M71.500 35v222M70 254.500h273M67 254.500h4M67 225.500h4M67 195.500h4M67 166.500h4M67 137.500h4M67 108.500h4M67 79.500h4M67 50.500h4M69 239.500h2M69 210.500h2M69 181.500h2M69 152.500h2M69 123.500h2M69 94.500h2M69 65.500h2M69 35.500h2M94.500 255v3M139.500 255v3M184.500 255v3M229.500 255v3M274.500 255v3M319.500 255v3M116.500 255v2M161.500 255v2M206.500 255v2M251.500 255v2M296.500 255v2M342.500 255v2"/>
          <g class="ticks end"><text x="64" y="256">0</text><text x="64" y="227">10</text><text x="64" y="198">20</text><text x="64" y="169">30</text><text x="64" y="140">40</text><text x="64" y="111">50</text><text x="64" y="82">60</text><text x="64" y="53">70</text></g>
          <g class="ticks"><text x="94" y="268">1</text><text x="139" y="268">2</text><text x="184" y="268">3</text><text x="229" y="268">4</text><text x="274" y="268">5</text><text x="319" y="268">6</text></g>
          <text class="name" x="207" y="286">A</text><text class="name" transform="translate(49 145) rotate(-90)">B</text>
          <path d="M292.500 11.500h39v16h-39z" fill="#fff" stroke="#000"/><path d="M294.500 13.500h25v12h-25z" fill="#8000ff" stroke="#000"/><text class="name" x="326" y="23">B</text>
        </svg>
      </div>
    </section>

    <section class="center">
      <header>User Templates</header>
      <div class="cards">
        <figure>
          <svg viewBox="0 0 160 136"><path d="M0 0h160v136H0z" fill="#dfdee4"/><path d="M38 11h60v31H38z" fill="#fafac8"/><path d="M38 35h60v7H38z" fill="#f6f4b0"/><path d="M38 42h60v85H38z" fill="#f4f4f4"/><path d="M0 11.500h98M0 19.500h38M0 27.500h38M0 35.500h38M0 42.500h38M0 50.500h38M0 58.500h38M0 66.500h38M0 74.500h38M0 81.500h38M0 89.500h38M0 97.500h38M0 105.500h38M0 113.500h38M0 120.500h38M38.500 0v127M68.500 0v11M98.500 0v11" stroke="#777"/><path d="M39 19.500h59M39 27.500h59M39 35.500h59M39 42.500h59M39 50.500h59M39 58.500h59M39 66.500h59M39 74.500h59M39 81.500h59M39 89.500h59M39 97.500h59M39 105.500h59M39 113.500h59M39 120.500h59M68.500 11v116M98.500 11v116" stroke="#ccc"/>
          <g class="mini"><text x="53" y="8">A(X)</text><text x="83" y="8">B(Y)</text></g><g class="mini r"><text x="36" y="18">Long Name</text><text x="36" y="26">Units</text><text x="36" y="34">Comments</text><text x="36" y="41">F(x)=</text><text x="36" y="49">1</text><text x="36" y="57">2</text><text x="36" y="65">3</text><text x="36" y="73">4</text><text x="36" y="80">5</text><text x="36" y="88">6</text><text x="36" y="96">7</text><text x="36" y="104">8</text><text x="36" y="112">9</text><text x="36" y="119">10</text><text x="36" y="127">11</text><text x="38" y="135">Sheet1</text></g>
          <path d="M39 135l4-7h75v8" fill="#c8c8c8" stroke="#666"/><path d="M119 128h41v8h-41z" fill="#eee"/><path d="M127 128h22v7h-22z" fill="#ccc"/><path d="M120.500 128v8M159.500 128v8M125 130l-2 2 2 2M153 130l2 2-2 2" stroke="#666" fill="none"/>
          <use href="#wb" x="0" y="110" width="26" height="26"/><circle cx="18" cy="18" r="10.500" fill="#008000"/><path d="M12 18l4 5 8-9" fill="none" stroke="#fff" stroke-width="3"/></svg>
          <figcaption>Blank Workbook</figcaption>
        </figure>
        <figure class="peek"><svg viewBox="0 0 160 136"><path d="M0 0h160v136H0z" fill="#8fb1b4"/><path d="M2 8h158v120H2z" fill="#d4f1df"/><path d="M0 0h160v5H0z" fill="#739fa5"/><use href="#wb" x="0" y="110" width="26" height="26"/></svg></figure>
        <figure>
          <svg viewBox="0 0 160 136"><path d="M.5.5h159v135H.5z" fill="#dfdee4" stroke="#7da0bf"/><path d="M1 1h158v6H1z" fill="#b9d1ea"/><path d="M148 1h11v5h-11z" fill="#c85a48"/><path d="M2 1h4v5H2z" fill="#255"/><path d="M2 14h46v5H2zM59 14h50v5H59zM119 14h27v5h-27z" fill="#eee" stroke="#999" stroke-width=".5"/>
          <g class="mini l"><text x="8" y="6">DoseResponse - Assays.template*</text><text x="3" y="12" class="help">Click on the "Help" tab to view usage instructions for this template.</text></g><g class="mini bold"><text x="26" y="19">Configure Datasheet</text><text x="84" y="19">Select Fitting Function</text><text x="132" y="19">Execute Fit</text></g>
          <path d="M31 30h84v17H31z" fill="#fafac8"/><path d="M31 41h84v6H31z" fill="#f6f4b0"/><path d="M31 47h84v83H31z" fill="#fff"/><path d="M1 30h114M1 34h30M1 38h30M1 42h30M1 47h30M1 51h30M1 55h30M1 59h30M1 63h30M1 67h30M1 71h30M1 75h30M1 79h30M1 83h30M1 87h30M1 91h30M1 95h30M1 99h30M1 103h30M1 107h30M1 111h30M1 115h30M1 119h30M1 123h30M1 127h30M31 23v106" stroke="#888" stroke-width=".7"/><path d="M31 34h84M31 38h84M31 51h84M31 55h84M50 24v34M70 24v34M93 24v34" stroke="#bbb" stroke-width=".7"/>
          <g class="mini"><text x="40" y="28">A(X)</text><text x="60" y="28">B(Y)</text><text x="81" y="28">C(Y)</text><text x="103" y="28">D(Y)</text><text x="40" y="33">Dose</text><text x="60" y="33">Response 1</text><text x="81" y="33">Response 2</text><text x="104" y="33">Response 3</text><text x="61" y="45">1</text><text x="81" y="45">2</text><text x="103" y="45">3</text><text x="40" y="51">-9.55284</text></g><g class="mini r tiny"><text x="30" y="33">Long Name</text><text x="30" y="37">Units</text><text x="30" y="41">Comments</text><text x="30" y="45">Replicate Number</text></g>
          <path d="M43 58h108v70H43z" fill="#fff" stroke="#aaa"/><path d="M62.500 66v51H136M60 72h2M60 84h2M60 96h2M60 108h2M76 117v2M91 117v2M106 117v2M121 117v2M136 117v2" fill="none" stroke="#777"/><path d="M69 110Q86 111 96 97T110 82q7-6 18-7" fill="none" stroke="#f00"/><path d="M69 108v4M77 108v3M84 107v3M91 102v4M99 93v5M106 86v6M113 76v6M121 73v5M129 73v5" stroke="#666"/><path d="M91.500 59.500h22v13h-22z" fill="#fff" stroke="#555"/><path d="M92 64h8" stroke="#f00"/><path d="M94 67h2" stroke="#080"/><path d="M94 70h2" stroke="#f0f"/><g class="mini l tiny"><text x="101" y="63">Mean</text><text x="101" y="67">Fit Curve</text><text x="101" y="71">X Best</text></g>
          <path d="M153 7h6v121h-6z" fill="#eee"/><path d="M153.500 12h5v69h-5z" fill="#ccc"/><path d="M28 130h86v5H28z" fill="#eee" stroke="#888" stroke-width=".5"/><path d="M116 130h42v5h-42z" fill="#ddd"/><g class="mini l"><text x="32" y="134">Fitting Result / Fit Curve / X Source</text></g>
          <use href="#wb" x="0" y="110" width="26" height="26"/><path d="M12 118h10v-3h1v10H12z" fill="#0e0" stroke="#060"/><path d="M14 118v-4q3-3 6 0v4" fill="none" stroke="#060" stroke-width="2"/></svg>
          <figcaption>Assays</figcaption>
        </figure>
        <figure class="peek"><svg viewBox="0 0 160 136"><path d="M0 0h160v136H0z" fill="#cfdefb"/><path d="M0 0h160v30H0z" fill="#fafac8"/><path d="M0 10.500h160M0 20.500h160M0 30.500h160M0 40.500h160M0 50.500h160M0 60.500h160M0 70.500h160" stroke="#c7c9b5"/><use href="#wb" x="0" y="110" width="26" height="26"/></svg></figure>
        <figure>
          <svg viewBox="0 0 160 136"><path d="M1.500 2.500h157v140H1.500z" fill="#d7e3f0" stroke="#5b7d96"/><path d="M3 12h149v40H3z" fill="#dfdee4"/><path d="M23 21h126v19H23z" fill="#fafac8"/><path d="M23 40h126v96H23z" fill="#ffdfc4"/><path d="M3 5h4v5H3z" fill="#066"/><path d="M3 12.500h149M3 40.500h149M3 53.500h20M23.500 12v28M63.500 12v128M102.500 12v128M149.500 12v128" stroke="#777"/><path d="M154 12h3v128h-3z" fill="#eee"/><path d="M133 5h7v4h-7zM142 5h7v4h-7zM150 5h7v4h-7z" fill="none" stroke="#889" stroke-width=".5"/><path d="M23 12h3l-3 3z" fill="#0c0"/>
          <g class="mini l"><text x="8" y="9">Book7</text></g><g class="mini"><text x="34" y="18">A(X)</text><text x="54" y="18">B(Y)</text><text x="69" y="18">C(Y)</text><text x="88" y="18">D(Y)</text><text x="113" y="18">E(Y)</text><text x="137" y="18">F(Y)</text><text x="34" y="26">Country</text><text x="54" y="26">Continent</text><text x="68" y="26">Year</text><text x="88" y="26">Life expectancy</text><text x="113" y="26">Population</text><text x="138" y="32">USD</text><text x="34" y="39">Japan</text></g><g class="mini tiny"><text x="137" y="26">GDP Per Capita</text></g><g class="mini r tiny"><text x="21" y="26">Long Name</text><text x="21" y="32">Units</text><text x="21" y="38">Filter</text></g><g class="mini bold"><text x="17" y="47">Mean</text><text x="14" y="53">Std Dev</text><text x="88" y="47">74.83</text><text x="113" y="47">117.75M</text><text x="137" y="47">17.79k</text><text x="88" y="53">6.49</text><text x="113" y="53">14.55M</text><text x="137" y="53">10.13k</text><text x="34" y="53">--</text><text x="54" y="53">--</text><text x="70" y="53">--</text></g></svg>
        </figure>
        <figure class="peek"><svg viewBox="0 0 160 136"><path d="M0 0h160v136H0z" fill="#dfdee4"/><path d="M0 2h8M0 6h8M0 12h160M0 20h160M0 28h160M0 36h160M0 45h160" stroke="#777"/></svg></figure>
      </div>
      <footer></footer>
    </section>
    <div class="mark">
      <svg viewBox="0 0 44 40"><path d="M43 1C27-1 9 6 3 18c-5 11 1 19 9 20C5 31 7 21 15 14 22 8 31 5 43 1z" fill="url(#swoosh)"/><path d="M32 11c-9 0-18 5-18 12 0 6 8 7 12 1-4 1-7-1-5-4 2-4 8-5 11-9z" fill="#4585bd"/><path d="M40 16c-8-3-14 3-11 6 3 4-2 13-14 17 14 1 26-9 25-23z" fill="url(#leaf)"/></svg>
      <p><strong>极光下载站</strong><span>www.xz7.com</span></p>
    </div>
  </main>
</div>

<section class="popup">
  <label class="none"><input type="checkbox">None</label>
  <div class="swatches">
    <button class="c-black on" aria-label="Black"></button><button class="c-red" aria-label="Red"></button><button class="c-green" aria-label="Green"></button><button class="c-blue" aria-label="Blue"></button><button class="c-cyan" aria-label="Cyan"></button><button class="c-magenta" aria-label="Magenta"></button><button class="c-yellow" aria-label="Yellow"></button><button class="c-olive" aria-label="Dark yellow"></button><button class="c-navy" aria-label="Navy"></button><button class="c-purple" aria-label="Purple"></button><button class="c-wine" aria-label="Wine"></button><button class="c-forest" aria-label="Olive"></button><button class="c-teal" aria-label="Dark cyan"></button><button class="c-royal" aria-label="Royal"></button><button class="c-orange" aria-label="Orange"></button><button class="c-violet" aria-label="Violet"></button><button class="c-pink" aria-label="Pink"></button><button class="c-white" aria-label="White"></button><button class="c-light" aria-label="Light gray"></button><button class="c-gray" aria-label="Gray"></button><button class="c-lemon" aria-label="Light yellow"></button><button class="c-aqua" aria-label="Light cyan"></button><button class="c-rose" aria-label="Light magenta"></button><button class="c-dark" aria-label="Dark gray"></button>
  </div>
  <button class="heading">More colors: S01 Gray Scale<i></i></button>
  <div class="swatches"><button class="c-black" aria-label="Black"></button><button class="c-dark" aria-label="Dark gray"></button><button class="c-gray" aria-label="Gray"></button><button class="c-light" aria-label="Light gray"></button><button class="c-white" aria-label="White"></button></div>
  <button class="heading">Custom<i></i></button>
  <div class="swatches"><button class="empty" aria-label="Custom colour"></button></div>
  <h3 class="heading">Recent colors</h3>
  <div class="swatches"><button class="c-violet" aria-label="Violet"></button><button class="c-red" aria-label="Red"></button><button class="c-dark" aria-label="Dark gray"></button><button class="c-black" aria-label="Black"></button><button class="c-gray" aria-label="Gray"></button><button class="c-black" aria-label="Black"></button></div>
</section>
<svg class="pointer left" viewBox="0 0 66 70"><path d="M2 66L47 19l-5-3L63 2 55 26l-4-4L4 68z" fill="#f00000" stroke="#b40000" stroke-width=".5"/></svg>
<svg class="pointer right" viewBox="0 0 16 76"><path d="M3 73L6 25l-5 2L8 1l6 25-5-1-3 48z" fill="#f00000" stroke="#b40000" stroke-width=".5"/></svg>
</body>
</html>
```
FILE: styles.css
```css
* { box-sizing: border-box; }
body {
  margin: 0;
  height: 100vh;
  display: flex;
  flex-direction: column;
  overflow: hidden;
  position: relative;
  background: #ebedfb;
  color: #000;
  font: 12px/16px "Noto Sans", sans-serif;
}
button, select, input { font: inherit; color: inherit; margin: 0; padding: 0; border: 0; background: none; }
h1, h2, h3, p, figure { margin: 0; font-weight: 400; font-size: inherit; }
svg { display: block; flex: none; }
.defs { position: absolute; width: 0; height: 0; }

.titlebar { flex: none; height: 23px; display: flex; align-items: center; gap: 4px; background: #fff; color: #999; font-size: 13px; }
.logo { width: 19px; height: 19px; }

.menubar { flex: none; height: 24px; display: flex; align-items: center; gap: 15px; padding-left: 2px; font-size: 11px; }
.menubar .grip { margin-right: -10px; }
.menubar u { text-underline-offset: 2px; }
.grip { flex: none; width: 10px; height: 15px; background: radial-gradient(circle, #a3a5b6 1px, transparent 2px) 0 0 / 10px 4px; }

.toolrow { flex: none; height: 26px; display: flex; background: linear-gradient(#dbdcec, #9fa0b7); }
.toolrow.second { border-bottom: 2px solid #8b8c9c; height: 27px; }
.bar { flex: none; display: flex; align-items: center; border-radius: 3px 0 0 3px; background: linear-gradient(#fbfbff, #e9eaf6 45%, #b5b6cb); }
.bar.grow { flex: 1; }
.tool { flex: none; width: 22px; height: 22px; display: grid; place-items: center; }
.tool svg, .fontbox svg { width: 16px; height: 16px; overflow: visible; }
.tool.active { background: #cfe6f8; border: 1px solid #0078d7; }
.sep { flex: none; width: 8px; height: 18px; background: linear-gradient(#b9bac9, #b9bac9) center / 1px 100% no-repeat; }
.drop { flex: none; width: 9px; height: 16px; display: grid; place-items: center; }
.second .drop { width: 10px; }
.drop::before { content: ""; border: 3px solid transparent; border-top-color: #000; border-bottom: 0; }
.second .drop.wide { width: 13px; }
.drop.off::before { border-top-color: #70727f; }
.more { flex: none; width: 13px; display: grid; align-content: end; justify-content: center; padding-bottom: 4px; }
.more::before { content: ""; width: 7px; height: 7px; background: #000; clip-path: polygon(0 0, 100% 0, 100% 1px, 0 1px, 0 3px, 100% 3px, 50% 100%, 0 3px); }

.combo { appearance: none; flex: none; height: 21px; padding-left: 3px; background: linear-gradient(45deg, transparent 50%, #000 50%) right 8px center / 3px 3px no-repeat, linear-gradient(-45deg, transparent 50%, #000 50%) right 5px center / 3px 3px no-repeat, #fff; font-size: 12px; opacity: 1; }
.combo.zoom { width: 57px; margin: 0 2px 0 11px; font-size: 11px; }
.combo.grey, .combo.plain { background: linear-gradient(45deg, transparent 50%, #70727f 50%) right 8px center / 3px 3px no-repeat, linear-gradient(-45deg, transparent 50%, #70727f 50%) right 5px center / 3px 3px no-repeat; color: #777; }
.combo.grey { width: 57px; margin: 0 3px; border: 1px solid #a7a7ac; background-color: #f0f0f2; }
.fontbox { width: 126px; height: 21px; margin: 0 1px 0 2px; display: flex; align-items: center; padding-left: 5px; border: 1px solid #a7a7ac; background: #f0f0f2; }
.combo.plain { flex: 1; height: 19px; font-size: 11px; }
.glyph { font: bold 16px/20px "Liberation Serif", serif; display: flex; align-items: center; justify-content: center; }
.glyph.italic { font-style: italic; }
.glyph.under { text-decoration: underline; }
.glyph.dim { color: #70727f; font-size: 14px; font-weight: 700; }
.glyph.greek { font-size: 16px; font-weight: 400; }
.glyph.big { font-size: 20px; font-weight: 400; }
.glyph.colour { color: #00007a; height: 18px; border-bottom: 4px solid #000; border-left: 3px solid transparent; border-right: 3px solid transparent; border-image: linear-gradient(90deg, transparent 3px, #000 3px, #000 19px, transparent 19px) 4 3; }
.glyph sup, .glyph sub { font-size: 8px; line-height: 9px; font-weight: 400; }
.glyph sup { align-self: flex-start; }
.glyph sub { align-self: flex-end; }
.glyph .both { display: grid; }
.glyph i { align-self: flex-start; margin-top: 3px; border: 2px solid transparent; }
.glyph .up { border-bottom: 3px solid #70727f; border-top: 0; }
.glyph .down { border-top: 3px solid #70727f; border-bottom: 0; }
.linebox { width: 57px; height: 21px; margin: 0 2px; display: flex; align-items: center; padding-left: 4px; border: 1px solid #a7a7ac; background: #f8f8fc; }
.linebox i { width: 34px; height: 1px; background: #000; }
.linebox::after { content: ""; margin-left: 9px; border: 3px solid transparent; border-top-color: #70727f; border-bottom: 0; }
.pattern { width: 36px; height: 16px; margin-left: 4px; border: 1px solid #fff; outline: 1px solid #aaa; background: #dfe0ed; }

.main { flex: 1; min-height: 0; display: flex; }
.dock { flex: none; width: 21px; display: flex; flex-direction: column; align-items: flex-start; }
.dock button { writing-mode: vertical-rl; width: 18px; padding-top: 6px; text-align: start; font: 10px/14px "Liberation Mono", monospace; color: #555; background: #f0f0f0; border-right: 1px solid #c6c6c6; border-bottom: 1px solid #c6c6c6; }
.dock .one { height: 151px; }
.dock .two { height: 101px; margin-top: 12px; }
.dock .three { height: 115px; margin-top: 12px; }
.rails { flex: none; width: 37px; border-right: 2px solid #6e6e6e; }
.rail { width: 35px; padding-left: 2px; border-radius: 4px; background: linear-gradient(90deg, #fbfbff, #e9eaf6 45%, #a9abc6); }
.rail.narrow { width: 26px; }
.rail > div { display: flex; align-items: center; }
.rail .drop { width: 6px; }
.hgrip { display: block; width: 22px; height: 9px; background: radial-gradient(circle, #a3a5b6 1px, transparent 2px) 0 0 / 4px 10px; }
.railmore { display: grid; width: 100%; height: 14px; place-items: center end; padding-right: 3px; }
.railmore::before { content: ""; width: 7px; height: 7px; background: #000; clip-path: polygon(0 0, 1px 0, 1px 100%, 3px 100%, 100% 50%, 3px 0, 3px 100%, 0 100%); }

.workspace { flex: 1; position: relative; overflow: hidden; background: #ababab; }
.window { position: absolute; display: flex; flex-direction: column; border: 1px solid #50565e; border-radius: 6px 6px 0 0; background: linear-gradient(#bccad9, #d7e4f2 32px); }
.window header { flex: none; display: flex; align-items: center; gap: 2px; }
.window h2 { flex: 1; padding-left: 2px; color: #999; font-size: 13px; }
.window header button { width: 32px; height: 18px; display: grid; place-items: center; border: 1px solid #8593aa; border-radius: 2px; background: #ccd8e7; box-shadow: inset 0 0 0 1px #dae4ef; }
.window header button svg { width: 16px; height: 16px; }
.wicon { width: 16px; height: 16px; }
.client { flex: 1; min-height: 0; overflow: hidden; border: 1px solid #6f7378; border-right-color: #fff; border-bottom-color: #fff; }
.book { left: 202px; top: 104px; width: 396px; height: 322px; padding: 0 9px 7px 8px; }
.book header { height: 30px; padding-top: 3px; }
.plot { left: 79px; top: 279px; width: 506px; height: 346px; padding: 0 6px 6px; border: 2px solid #b4008c; }
.plot header { height: 29px; padding: 3px 2px 0; }
.sheet { display: flex; justify-content: space-between; background: #e0dfe4; }
.sheet table { align-self: flex-start; border-collapse: collapse; table-layout: fixed; width: 220px; font: 13px/15px "Liberation Sans", sans-serif; }
.sheet th, .sheet td { padding: 0 4px; height: 16px; text-align: right; vertical-align: top; font-weight: 400; border: 1px solid #c0c0c0; }
.sheet th { border-color: #000; background: #b5bbd3; border-left: 0; }
.sheet th:first-child { width: 86px; }
.sheet thead th { height: 23px; border-top: 0; text-align: center; vertical-align: middle; background: #e0dfe4; font-size: 12px; }
.sheet thead .sel { background: #b5bbd3; }
.sheet .meta th { background: #e0dfe4; }
.sheet .meta td { background: #fafac8; }
.sheet .tall th { height: 32px; }
.sheet .fx td { background: #f7f5b0; }
.sheet td { background: #fff; }
.sheet tr:not(.meta) td:last-child { background: #000; color: #fff; border-color: #444; }
.scroll { width: 16px; background: #f0f0f0; }
.scroll svg { width: 16px; height: 17px; }
.scroll i { display: block; height: 62px; background: #cdcdcd; }
.canvas { background: #c0c0c0; border-left-width: 2px; }
.chart { width: 397px; height: 304px; background: #fff; }
.column path { fill: #8000ff; stroke: #000; }
.axis { fill: none; stroke: #000; }
.chart text { font-family: "Liberation Sans", sans-serif; text-anchor: middle; }
.chart .ticks { font-size: 9px; }
.chart .end text { text-anchor: end; }
.chart .name { font-size: 11px; }
.chart .layer { font: bold 13px "Noto Sans", sans-serif; }

.center { position: absolute; left: 888px; top: 123px; width: 640px; height: 591px; display: flex; flex-direction: column; background: #fff; box-shadow: 0 1px 8px rgba(0, 0, 0, .55); }
.center header { flex: none; height: 69px; padding: 40px 0 0 160px; font-weight: 600; border-bottom: 2px solid #1a9ade; }
.cards { flex: 1; min-height: 0; overflow: hidden; display: grid; grid-template-columns: repeat(2, 160px); grid-auto-rows: 192px; column-gap: 32px; padding: 30px 16px 0; align-content: start; }
.cards figure svg { width: 160px; height: 136px; }
.cards figcaption { padding-top: 11px; text-align: center; font-size: 12px; line-height: 18px; }
.center footer { flex: none; height: 53px; background: #f7f7f7; border-top: 1px solid #ccc; }
.mini { font: 6px "Liberation Sans", sans-serif; text-anchor: middle; fill: #444; }
.mini.r { text-anchor: end; }
.mini.l { text-anchor: start; font-size: 4px; }
.mini .help { font-size: 5px; }
.mini.bold { font-size: 5px; font-weight: 700; }
figure:nth-child(n+3) .mini:not(.bold):not(.l) { font-size: 4px; }
figure:nth-child(n+3) .mini.tiny:not(.bold) { font-size: 3px; }

.mark { position: absolute; right: 12px; bottom: 7px; display: flex; align-items: center; }
.mark svg { width: 44px; height: 40px; }
.mark p { display: flex; flex-direction: column; }
.mark strong { font: bold 21px/24px "Noto Sans CJK SC", sans-serif; color: #447fb5; }
.mark span { font: 17px/18px "Liberation Sans", sans-serif; color: #41a368; }

.popup { position: absolute; left: 824px; top: 97px; width: 303px; padding: 8px 6px 5px 7px; background: #f0f0f0; border: 1px solid #fff; border-right: 2px solid #777; border-bottom: 2px solid #777; font-size: 13px; }
.none { display: flex; align-items: center; gap: 8px; height: 15px; padding-left: 2px; margin-bottom: 9px; }
.none input { appearance: none; width: 15px; height: 15px; border: 1px solid #a5a5a5; background: #f4f4f4; }
.swatches { display: flex; flex-wrap: wrap; gap: 3px; }
.swatches button { width: 15px; height: 15px; border: 1px solid #a0a0a0; }
.swatches .on { border-color: #f0b070; outline: 1px solid #00007a; outline-offset: 1px; box-shadow: 0 0 0 1px #f0b070; }
.swatches .empty { border-color: #c0c0c0; }
.heading { display: flex; align-items: center; height: 25px; gap: 2px; padding-bottom: 2px; }
.heading i { margin-top: 6px; border: 6px solid transparent; border-top-color: #808080; border-bottom: 0; }
.c-black { background: #000; } .c-red { background: #f00; } .c-green { background: #0f0; } .c-blue { background: #00f; }
.c-cyan { background: #0ff; } .c-magenta { background: #f0f; } .c-yellow { background: #ff0; } .c-olive { background: #808000; }
.c-navy { background: #000080; } .c-purple { background: #800080; } .c-wine { background: #800000; } .c-forest { background: #008000; }
.c-teal { background: #008080; } .c-royal { background: #0000a0; } .c-orange { background: #ff8000; } .c-violet { background: #8000ff; }
.c-pink { background: #ff0080; } .c-white { background: #fff; } .c-light { background: #c0c0c0; } .c-gray { background: #808080; }
.c-lemon { background: #ffff80; } .c-aqua { background: #80ffff; } .c-rose { background: #ff80ff; } .c-dark { background: #404040; }
.pointer { position: absolute; filter: drop-shadow(2px 3px 2px rgba(0, 0, 0, .5)); }
.pointer.left { left: 776px; top: 93px; width: 66px; height: 70px; }
.pointer.right { left: 1099px; top: 146px; width: 16px; height: 76px; }
```
